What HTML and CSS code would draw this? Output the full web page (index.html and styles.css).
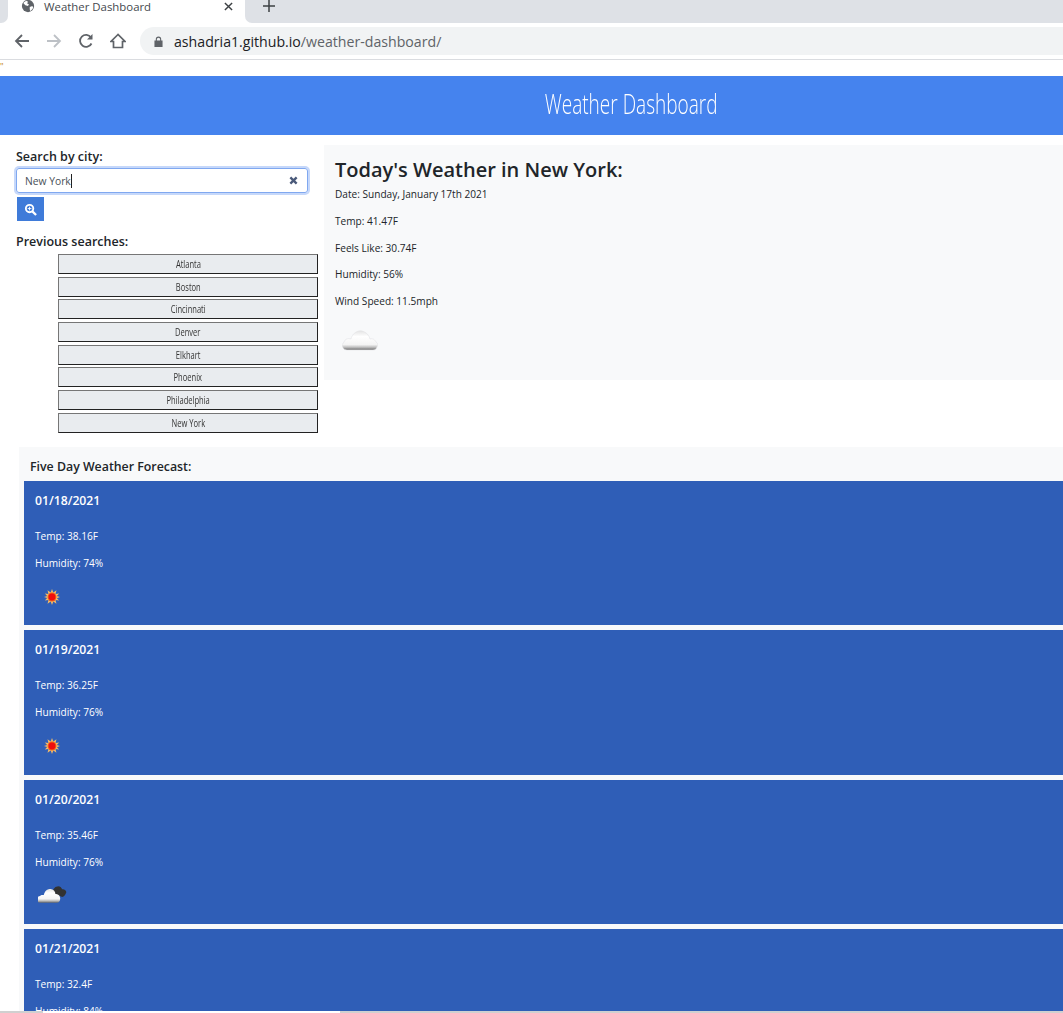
FILE: index.html
```html
<!DOCTYPE html>
<html lang="en">
<head>
  <meta charset="UTF-8">
  <meta name="viewport" content="width=device-width, initial-scale=1.0">
  <title>Weather Dashboard</title>
  <link rel="stylesheet" href="styles.css">
</head>
<body>
  <div class="tabstrip">
    <div class="strip-left"></div>
    <div class="tab">
      <svg class="tab-globe" viewBox="0 0 16 16"><circle cx="8" cy="8" r="7" fill="#5f6368"/><path d="M3 4l3-2 2 1-1 2 2 1-1 2-3-1-2-2zM10 9l3-1 1 2-3 4-1-2z" fill="#fff"/></svg>
      <span class="tab-title">Weather Dashboard</span>
      <svg class="tab-close" viewBox="0 0 10 10"><path d="M1 1l8 8M9 1l-8 8" stroke="#3c4043" stroke-width="1.6" fill="none"/></svg>
    </div>
    <div class="strip-rest">
      <svg class="tab-new" viewBox="0 0 12 12"><path d="M6 0v12M0 6h12" stroke="#3c4043" stroke-width="1.500" fill="none"/></svg>
    </div>
  </div>

  <div class="toolbar">
    <svg class="nav-icon" viewBox="0 0 16 16"><path d="M15 8H2M8 2L2 8l6 6" stroke="#5f6368" stroke-width="1.8" fill="none"/></svg>
    <svg class="nav-icon" viewBox="0 0 16 16"><path d="M1 8h13M8 2l6 6-6 6" stroke="#bdc1c6" stroke-width="1.8" fill="none"/></svg>
    <svg class="nav-icon" viewBox="0 0 16 16"><path d="M13.500 10.500A6 6 0 1 1 13 4.500" stroke="#5f6368" stroke-width="1.8" fill="none"/><path d="M14.500 1v5.500H9z" fill="#5f6368"/></svg>
    <svg class="nav-icon" viewBox="0 0 16 16"><path d="M8 1.500L1 8.500h2.500v6h9v-6H15z" stroke="#5f6368" stroke-width="1.7" fill="none"/></svg>
    <div class="omnibox">
      <svg class="lock" viewBox="0 0 10 12"><path d="M2 5V3.500a3 3 0 0 1 6 0V5h1.500v7H.5V5zM3.200 5h3.600V3.500a1.800 1.800 0 0 0-3.600 0z" fill="#5f6368"/></svg>
      <span class="url">ashadria1.github.io<span class="url-path">/weather-dashboard/</span></span>
    </div>
  </div>

  <div class="page">
    <div class="stray">"</div>
    <header class="site-header"><span class="site-title">Weather Dashboard</span></header>

    <div class="top-row">
      <aside class="sidebar">
        <label class="side-label">Search by city:</label>
        <div class="search-box">
          <span class="search-text">New York</span>
          <svg class="search-clear" viewBox="0 0 10 10"><path d="M1.500 1.500l7 7M8.500 1.500l-7 7" stroke="#4a5a7a" stroke-width="2.600" fill="none"/></svg>
        </div>
        <button class="search-btn">
          <svg viewBox="0 0 14 14"><circle cx="6" cy="6" r="4" fill="none" stroke="#fff" stroke-width="2"/><path d="M9 9l4 4" stroke="#fff" stroke-width="2.400"/><path d="M4 6h4M6 4v4" stroke="#fff" stroke-width="1"/></svg>
        </button>
        <label class="side-label prev-label">Previous searches:</label>
        <div class="history">
          <button class="history-btn"><span>Atlanta</span></button>
          <button class="history-btn"><span>Boston</span></button>
          <button class="history-btn"><span>Cincinnati</span></button>
          <button class="history-btn"><span>Denver</span></button>
          <button class="history-btn"><span>Elkhart</span></button>
          <button class="history-btn"><span>Phoenix</span></button>
          <button class="history-btn"><span>Philadelphia</span></button>
          <button class="history-btn"><span>New York</span></button>
        </div>
      </aside>

      <section class="today">
        <h2>Today's Weather in New York:</h2>
        <p>Date: Sunday, January 17th 2021</p>
        <p>Temp: 41.47F</p>
        <p>Feels Like: 30.74F</p>
        <p>Humidity: 56%</p>
        <p>Wind Speed: 11.5mph</p>
        <svg class="today-icon" viewBox="0 0 36 22">
          <defs>
            <linearGradient id="cloud" x1="0" y1="0" x2="0" y2="1">
              <stop offset="0" stop-color="#e4e4e4"/><stop offset=".3" stop-color="#fff"/><stop offset=".72" stop-color="#f4f4f4"/><stop offset=".86" stop-color="#bdbdbd"/><stop offset="1" stop-color="#6a6a6a"/>
            </linearGradient>
            <filter id="soft"><feGaussianBlur stdDeviation=".35"/></filter>
          </defs>
          <path d="M5 21a4.500 4.500 0 0 1-3-8c1-3 4-4 7-3 1-5 6-9 11-8 4 1 7 4 8 8 3-1 5 1 6 3 2 1 2 3 1 5-.5 2-2 3-4 3z" fill="url(#cloud)" stroke="#e2e3e5" stroke-width=".6" filter="url(#soft)"/>
        </svg>
      </section>
    </div>

    <section class="forecast">
      <h3 class="forecast-title">Five Day Weather Forecast:</h3>

      <div class="day-card">
        <h4>01/18/2021</h4>
        <p>Temp: 38.16F</p>
        <p>Humidity: 74%</p>
        <svg class="day-icon" viewBox="0 0 18 18"><g filter="url(#soft)"><path d="M9 0l1.500 4L14 1.500 13 5.500l4-.5-2.500 3L18 9l-3.500 1.500L17 13l-4-.5 1 4-3.500-2.500L9 18l-1.500-4L4 16.500l1-4-4 .5 2.500-3L0 9l3.500-1L1 5l4 .5-1-4L7.500 4z" fill="#f2b968"/><circle cx="9" cy="9" r="5" fill="#f06018"/><circle cx="9" cy="9" r="3.800" fill="#f01010"/></g></svg>
      </div>

      <div class="day-card">
        <h4>01/19/2021</h4>
        <p>Temp: 36.25F</p>
        <p>Humidity: 76%</p>
        <svg class="day-icon" viewBox="0 0 18 18"><g filter="url(#soft)"><path d="M9 0l1.500 4L14 1.500 13 5.500l4-.5-2.500 3L18 9l-3.500 1.500L17 13l-4-.5 1 4-3.500-2.500L9 18l-1.500-4L4 16.500l1-4-4 .5 2.500-3L0 9l3.500-1L1 5l4 .5-1-4L7.500 4z" fill="#f2b968"/><circle cx="9" cy="9" r="5" fill="#f06018"/><circle cx="9" cy="9" r="3.800" fill="#f01010"/></g></svg>
      </div>

      <div class="day-card">
        <h4>01/20/2021</h4>
        <p>Temp: 35.46F</p>
        <p>Humidity: 76%</p>
        <svg class="day-icon-wide" viewBox="0 0 30 20">
          <g filter="url(#soft)">
            <path d="M15 9c0-4 3-7 6-7 2 0 3 1 4 3 3 0 5 2 4 4s-2 4-4 4z" fill="#333"/>
            <path d="M3 19a3.500 3.500 0 0 1-1-7c1-1 2-1 4-1 1-5 5-7 8-6 2 .5 4 2 4 5 2 0 5 1 5 5 0 3-2 4-3 4z" fill="url(#cloud)"/>
          </g>
        </svg>
      </div>

      <div class="day-card">
        <h4>01/21/2021</h4>
        <p>Temp: 32.4F</p>
        <p>Humidity: 84%</p>
      </div>
    </section>
  </div>

  <div class="bottom-line">
    <div class="line-gap"></div>
  </div>
</body>
</html>
```

FILE: styles.css
```css
body {
  margin: 0;
  height: 100vh;
  overflow: hidden;
  display: flex;
  flex-direction: column;
  background: #fff;
  color: #212529;
  font-family: "Open Sans", "Noto Sans", sans-serif;
}

/* browser chrome */
.tabstrip {
  height: 23px;
  flex: none;
  display: flex;
}
.strip-left {
  width: 8px;
  background: #dee1e6;
  border-bottom-right-radius: 7px;
}
.tab {
  width: 237px;
  box-sizing: border-box;
  padding: 0 12px 11px 13px;
  display: flex;
  align-items: center;
}
.tab-globe {
  width: 14px;
  height: 14px;
  margin-right: 9px;
}
.tab-title {
  flex: 1;
  font-size: 11.400px;
  color: #45494e;
}
.tab-close {
  width: 9px;
  height: 9px;
}
.strip-rest {
  flex: 1;
  padding: 0 0 11px 18px;
  display: flex;
  align-items: center;
  background: #dee1e6;
  border-bottom-left-radius: 7px;
}
.tab-new {
  width: 12px;
  height: 12px;
}
.toolbar {
  height: 37px;
  flex: none;
  box-sizing: border-box;
  padding-left: 14px;
  display: flex;
  align-items: center;
  border-bottom: 1px solid #dadce0;
}
.nav-icon {
  width: 16px;
  height: 16px;
  margin-right: 16px;
}
.omnibox {
  flex: 1;
  height: 28px;
  margin-left: -2px;
  padding-left: 14px;
  display: flex;
  align-items: center;
  background: #f1f3f4;
  border-radius: 14px 0 0 14px;
}
.lock {
  width: 9px;
  height: 11px;
  margin-right: 11px;
}
.url {
  font-size: 14.150px;
  color: #202124;
}
.url-path {
  color: #5f6368;
}

/* page */
.page {
  flex: 1;
  min-height: 0;
  overflow: hidden;
}
.stray {
  height: 16px;
  font-size: 9px;
  line-height: 14px;
  color: #c08020;
}
.site-header {
  height: 59px;
  box-sizing: border-box;
  padding: 0 0 6px 200px;
  display: flex;
  align-items: center;
  justify-content: center;
  background: #4583ee;
  color: #fff;
}
.site-title {
  font-size: 28px;
  font-weight: 300;
  transform: scaleX(.68);
  white-space: nowrap;
}
.top-row {
  display: flex;
  padding-top: 10px;
}
.sidebar {
  width: 324px;
  flex: none;
  box-sizing: border-box;
  padding: 3px 6px 0 16px;
}
.side-label {
  display: block;
  font-size: 12.500px;
  font-weight: 600;
  line-height: 17px;
}
.search-box {
  width: 292px;
  height: 25px;
  margin-top: 3px;
  box-sizing: border-box;
  padding: 0 9px 0 8px;
  display: flex;
  align-items: center;
  justify-content: space-between;
  border: 1px solid #80a8f0;
  border-radius: 3px;
  box-shadow: 0 0 0 2px #c6d8fa;
}
.search-text {
  font-size: 10.300px;
  color: #495057;
  border-right: 1px solid #222;
  line-height: 14px;
}
.search-clear {
  width: 9px;
  height: 9px;
}
.search-btn {
  display: flex;
  align-items: center;
  justify-content: center;
  width: 27px;
  height: 24px;
  margin: 4px 0 0 1px;
  padding: 0;
  border: none;
  background: #3f7bd9;
}
.search-btn svg {
  width: 13px;
  height: 13px;
}
.prev-label {
  margin-top: 12px;
}
.history {
  margin: 3.900px 0 0 42px;
  display: flex;
  flex-direction: column;
  gap: 2.700px;
}
.history-btn {
  height: 20px;
  padding: 0;
  box-sizing: border-box;
  background: #e9ecef;
  border: 1px solid;
  border-color: #767676 #222 #222 #767676;
  font-family: "Open Sans", sans-serif;
  font-size: 10.500px;
  color: #333;
}
.history-btn span {
  display: inline-block;
  transform: scaleX(.72);
}
.today {
  flex: 1;
  height: 235px;
  box-sizing: border-box;
  padding: 12px 11px;
  background: #f8f9fa;
}
.today h2 {
  margin: 0 0 4px;
  font-size: 20px;
  font-weight: 600;
  line-height: 25px;
}
.today p {
  margin: 0 0 10.750px;
  font-size: 10.100px;
  line-height: 16px;
}
.today-icon {
  display: block;
  width: 36px;
  height: 22px;
  margin: 20px 0 0 7px;
}
.forecast {
  margin: 14px 0 0 19px;
  padding: 10px 0 0 5px;
  background: #f8f9fa;
}
.forecast-title {
  margin: 0;
  height: 23.900px;
  padding-left: 6px;
  font-size: 12.350px;
  font-weight: 600;
  line-height: 19px;
}
.day-card {
  height: 144.550px;
  margin-bottom: 5px;
  box-sizing: border-box;
  padding: 11px;
  background: #2f5eb7;
  color: #fff;
}
.day-card h4 {
  margin: 0 0 19px;
  font-size: 12.200px;
  font-weight: 600;
  line-height: 17px;
}
.day-card p {
  margin: 0 0 11px;
  font-size: 10.100px;
  line-height: 16px;
}
.day-icon {
  display: block;
  width: 16px;
  height: 16px;
  margin: 18px 0 0 9px;
}
.day-icon-wide {
  display: block;
  width: 29px;
  height: 20px;
  margin: 14px 0 0 3px;
}
.bottom-line {
  height: 2px;
  flex: none;
  background: #d0d0d0;
}
.line-gap {
  width: 297px;
  height: 2px;
  margin-left: 43px;
  background: #fff;
}
```
